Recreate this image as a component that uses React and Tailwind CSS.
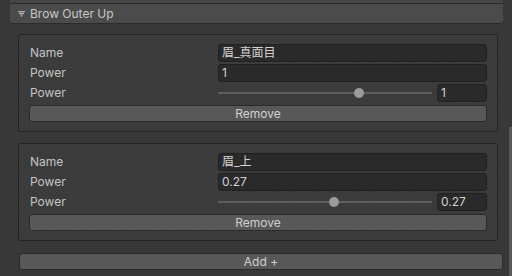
import React from "react";

const entries = [
  { name: "眉_真面目", power: "1", pos: 141 },
  { name: "眉_上", power: "0.27", pos: 116 },
];

const FoldoutArrow = () => (
  <svg width="7" height="6" viewBox="0 0 7 6" className="shrink-0">
    <rect x="0" y="0" width="7" height="1" fill="#a8a8a8" />
    <rect x="1" y="2" width="5" height="1" fill="#a8a8a8" />
    <rect x="2" y="3" width="3" height="1" fill="#8a8a8a" />
    <rect x="3" y="5" width="1" height="1" fill="#a8a8a8" />
    <rect x="1" y="1" width="5" height="1" fill="#7a7a7a" />
    <rect x="2" y="4" width="3" height="1" fill="#7a7a7a" />
  </svg>
);

const Field = ({ children, className = "" }) => (
  <div
    className={
      "h-[18px] rounded-[3px] border border-[#212121] bg-[#2a2a2a] pl-[3px] flex items-center text-[#d2d2d2] " +
      className
    }
  >
    {children}
  </div>
);

const Row = ({ label, children }) => (
  <div className="flex items-center h-[18px]">
    <div className="w-[189px] shrink-0 pl-[1px]">{label}</div>
    <div className="flex-1 min-w-0">{children}</div>
  </div>
);

const Entry = ({ entry }) => (
  <div className="ml-[18px] w-[480px] h-[98px] border border-[#242424] rounded-[2px] bg-[#3b3b3b] bg-[radial-gradient(#434343_0.6px,transparent_0.8px)] bg-[length:5px_5px] pt-[9px] pl-[10px] pr-[10px] flex flex-col gap-[2px]">
    <Row label="Name">
      <Field className="font-['Inter','Noto_Sans_CJK_JP',sans-serif]">{entry.name}</Field>
    </Row>
    <Row label="Power">
      <Field>{entry.power}</Field>
    </Row>
    <Row label="Power">
      <div className="flex items-center">
        <div className="relative w-[214px] h-[18px] flex items-center">
          <div className="w-full h-[2px] bg-[#5e5e5e]" />
          <div
            className="absolute top-[4px] w-[10px] h-[10px] rounded-full bg-[#9a9a9a]"
            style={{ left: entry.pos - 5 }}
          />
        </div>
        <Field className="ml-[5px] flex-1">{entry.power}</Field>
      </div>
    </Row>
    <button className="mt-[1px] h-[17px] w-full rounded-[3px] border border-[#2b2b2b] bg-[#585858] text-[#d0d0d0] leading-none">
      Remove
    </button>
  </div>
);

export default function App() {
  return (
    <div className="relative w-[512px] h-[276px] overflow-hidden bg-[#383838] text-[12px] text-[#c4c4c4] font-['Inter','Noto_Sans_CJK_JP',sans-serif]">
      <div className="ml-[10px] w-[493px] h-[4px] bg-[#464646] border-b border-[#2a2a2a]" />
      <div className="ml-[10px] w-[493px] h-[20px] bg-[#4b4b4b] border-b border-[#2c2c2c] rounded-b-[3px] flex items-center pl-[8px] gap-[5px]">
        <FoldoutArrow />
        <span className="text-[#c8c8c8]">Brow Outer Up</span>
      </div>
      <div className="mt-[10px] flex flex-col gap-[11px]">
        {entries.map((e, i) => (
          <Entry key={i} entry={e} />
        ))}
      </div>
      <button className="mt-[12px] ml-[19px] w-[484px] h-[17px] rounded-[3px] border border-[#2b2b2b] bg-[#585858] text-[#d0d0d0] leading-none">
        Add +
      </button>
      <div className="absolute right-0 top-[127px] w-[3px] h-[149px] bg-[#5a5a5a]" />
    </div>
  );
}
